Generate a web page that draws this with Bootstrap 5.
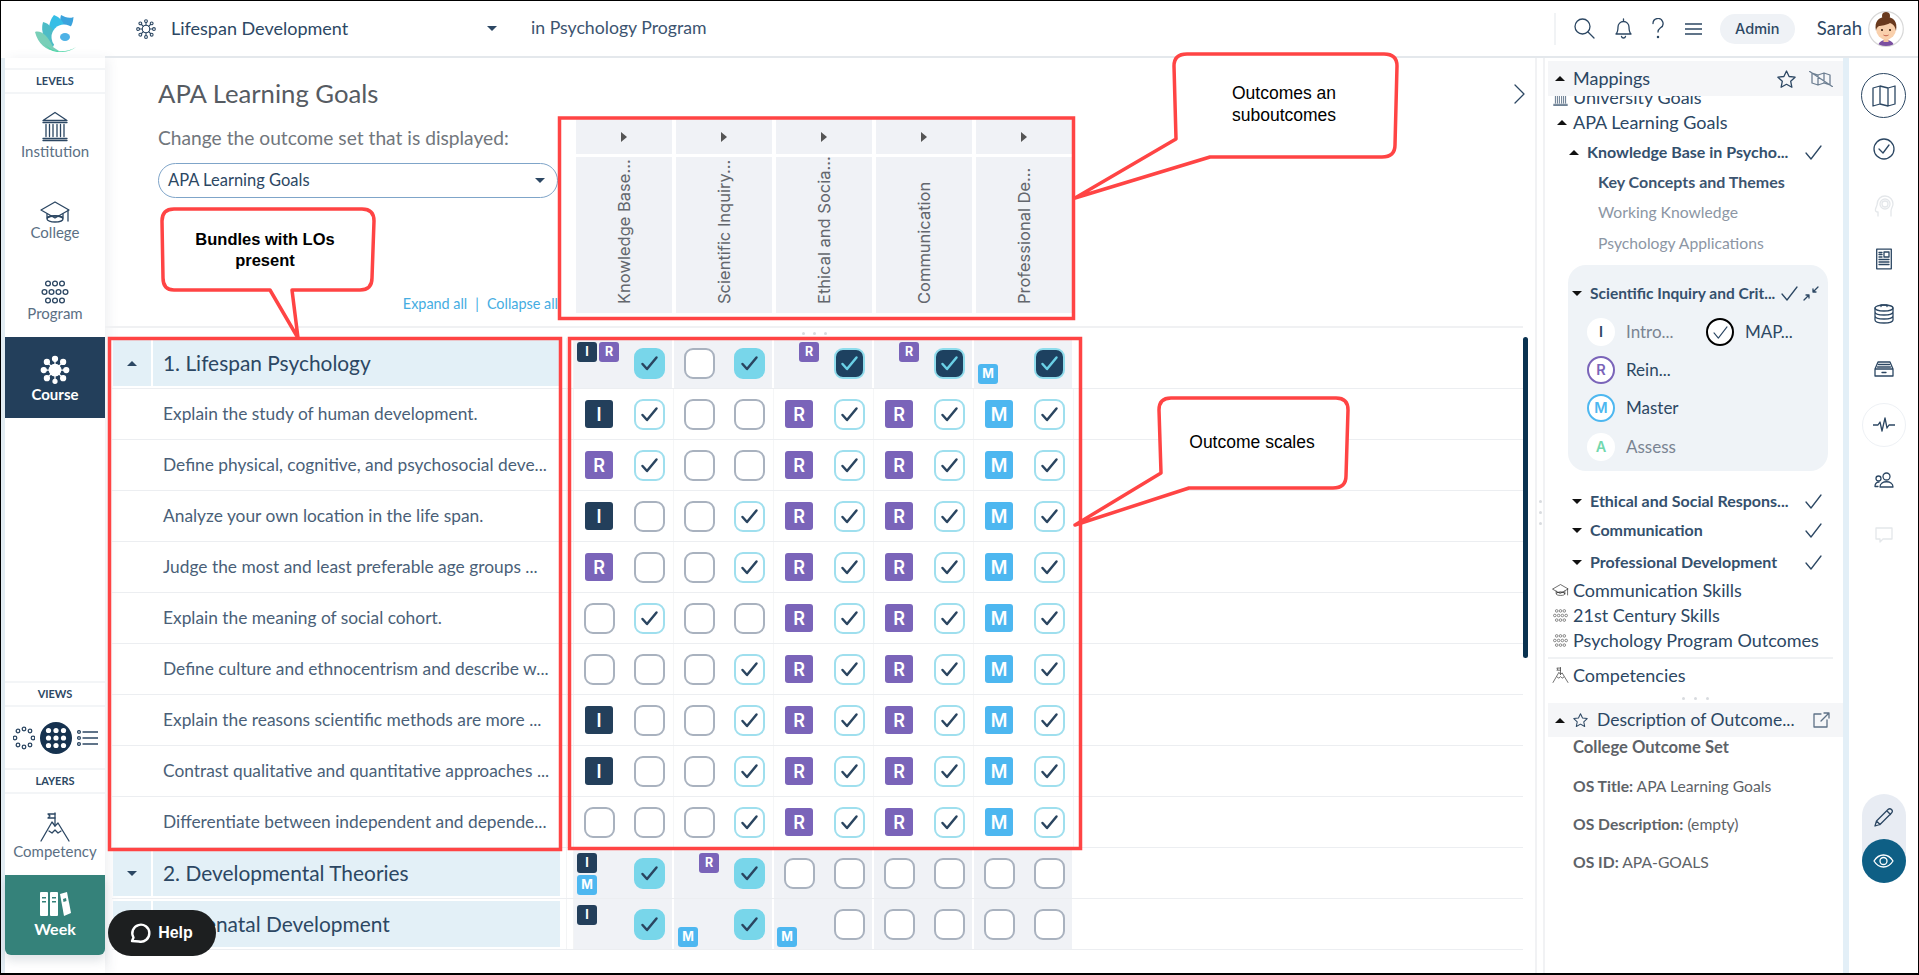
<!DOCTYPE html>
<html lang="en">
<head>
  <meta charset="UTF-8" />
  <title>APA Learning Goals</title>
  <link href="https://cdn.jsdelivr.net/npm/bootstrap@5.3.3/dist/css/bootstrap.min.css" rel="stylesheet" />
  <style>
    html, body { margin: 0; height: 975px; overflow: hidden; background: #fff; }
    body { font-family: "Lato", "Open Sans", sans-serif; color: #2c4763; }
    .frame { width: 1919px; height: 975px; border: 1px solid #000; border-bottom-width: 2px; position: relative; overflow: hidden; }
    .ico { fill: none; stroke: #2c4763; stroke-width: 1.3; stroke-linecap: round; stroke-linejoin: round; display: block; }

    /* left rail */
    .side-wrap { width: 104px; background: #e4eef4; flex: none; padding-left: 4px; }
    .side-logo { height: 57px; background: #fff; margin-left: -4px; padding-left: 34px; padding-top: 13px; width: 104px; }
    .side-in { width: 100px; height: 915px; background: #fff; box-shadow: 4px 0 10px rgba(60, 80, 100, .08); }
    .side-cap { height: 26px; border-top: 2px solid #f3f5f7; border-bottom: 2px solid #f3f5f7; font-size: 11px; font-weight: 700; line-height: 22px; text-align: center; color: #2c4763; }
    .side-item { height: 81px; padding-bottom: 15px; font-size: 15px; line-height: 17px; color: #5b6f84; }
    .side-item svg { margin-bottom: 1px; }
    .side-on { background: #233f5b; color: #fff; font-weight: 700; }
    .side-week { background: #35827a; color: #fff; font-weight: 700; height: 80px; padding-top: 3px; border-radius: 0 0 6px 6px; box-shadow: 0 6px 10px rgba(60, 80, 100, .15); }
    .view-row { height: 61px; padding: 0 7px 0 8px; }
    .view-on { width: 32px; height: 32px; border-radius: 50%; background: #16324f; }

    /* top bar */
    .top-bar { height: 57px; border-bottom: 2px solid #e4e8ec; padding-left: 31px; flex: none; }
    .top-title { font-size: 18px; width: 326px; margin-left: 15px; }
    .top-in { font-size: 17.7px; color: #3c5470; margin-left: 34px; }
    .top-sep { width: 2px; height: 32px; background: #f1f3f5; margin-right: 18px; }
    .admin-pill { width: 75px; height: 30px; background: #eff2f6; border-radius: 15px; font-size: 14.5px; font-family: "Inter", sans-serif; font-weight: 500; margin-left: 18px; }
    .user-name { font-size: 18.5px; margin-left: 22px; margin-right: 6px; }
    .avatar-box { width: 36px; height: 36px; margin-right: 14px; }

    .crt-up, .crt-dn, .crt-r { display: inline-block; width: 0; height: 0; flex: none; }
    .crt-up { border-left: 5px solid transparent; border-right: 5px solid transparent; border-bottom: 5px solid #2c4763; }
    .crt-dn { border-left: 5px solid transparent; border-right: 5px solid transparent; border-top: 5px solid #2c4763; }
    .crt-r { border-top: 5px solid transparent; border-bottom: 5px solid transparent; border-left: 6px solid #555; }
    .crt-blk { border-bottom-color: #111; border-top-color: #111; }

    /* heading area */
    .main-col { width: 1418px; flex: none; }
    .head-zone { height: 270px; border-bottom: 2px solid #f0f1f3; }
    .head-left { width: 471px; padding-left: 53px; padding-top: 20px; flex: none; }
    .page-h { font-size: 25.7px; line-height: 30px; color: #565b62; margin: 0; font-weight: 400; }
    .page-sub { font-size: 19.2px; line-height: 24px; color: #71767c; margin-top: 18px; }
    .set-select { width: 400px; height: 35px; border: 1px solid #7fa5c9; border-radius: 18px; margin-top: 13px; padding: 0 12px 0 9px; font-size: 16.5px; }
    .exp-links { margin-top: 96px; font-size: 14.4px; line-height: 20px; color: #45ade2; width: 400px; text-align: right; white-space: nowrap; }
    .exp-bar { margin: 0 8px; }
    .head-grid { padding-top: 61px; display: grid; grid-template-columns: repeat(5, 96px); grid-template-rows: 35px 156px; gap: 3px 4px; flex: none; }
    .hd-cell { background: #f0f2f6; }
    .hd-txt { writing-mode: vertical-rl; transform: rotate(180deg); font-family: "Inter", sans-serif; font-size: 16.5px; color: #63676d; padding-top: 9px; line-height: 24px; white-space: nowrap; }
    .side-arrow { margin-left: 442px; margin-top: 26px; flex: none; }

    .dots-strip { height: 10px; padding-left: 8px; }
    .dot3 { width: 3px; height: 3px; background: #d8dbdf; border-radius: 50%; }
    .tb-wrap { padding-left: 7px; width: 1418px; }
    .tb-row { height: 51px; border-bottom: 1px solid #eceef1; }
    .tb-left { width: 454px; flex: none; font-size: 17.35px; color: #4a5f78; padding-left: 51px; white-space: nowrap; }
    .tb-gut { width: 8px; flex: none; border-left: 1px solid #f3f4f5; border-right: 1px solid #f3f4f5; }
    .tb-pair { width: 100px; flex: none; border-right: 1px solid #f5f6f7; position: relative; }
    .tb-slot { width: 50px; height: 100%; flex: none; }
    .grp .tb-left { padding: 2px 6px 2px 1px; gap: 2px; font-size: 20.9px; color: #2c4763; }
    .grp-crt { width: 38px; height: 100%; background: #e3f0f7; }
    .grp-ttl { flex-grow: 1; height: 100%; background: #e3f0f7; padding-left: 10px; }
    .grp .tb-pair { background: #f0f2f6; border-right: 2px solid #fff; }
    .ck-box { width: 31px; height: 31px; border-radius: 9px; border: 2px solid #a9b2bf; background: #fff; }
    .ck-on { border-color: #9fdfee; }
    .ck-cy { background: #78d6ea; border-color: #78d6ea; }
    .ck-dk { background: #1d4160; border-color: #8fdcec; }
    .ck-box svg { fill: none; stroke: #2a4560; stroke-width: 2.5; stroke-linecap: round; stroke-linejoin: round; width: 24px; height: 24px; }
    .ck-dk svg { stroke: #6ad0e6; }
    .lvl { width: 28px; height: 28px; border-radius: 3px; color: #fff; font-family: "Inter", sans-serif; font-weight: 600; font-size: 18px; }
    .lvl-sm { width: 20px; height: 20px; font-size: 12.5px; font-weight: 700; position: absolute; }
    .lv-I { background: #233f5b; }
    .lv-R { background: #7a64b9; }
    .lv-M { background: #4db7f0; }

    .scroll-nav { width: 5px; height: 321px; background: #0a3250; border-radius: 3px; position: absolute; left: 1522px; top: 336px; }
    .gutter-main { width: 10px; flex: none; border-left: 2px solid #f1f2f4; border-right: 2px solid #f1f2f4; margin-left: 12px; padding-top: 442px; }

    /* right panel */
    .pn { width: 298px; flex: none; padding: 3px 0 0 3px; }
    .pn-strip { width: 6px; flex: none; background: #e3eff7; }
    .pn-hd { height: 35px; background: #f5f6f8; padding-left: 7px; position: relative; z-index: 1; font-size: 18px; }
    .pn-hd-d { height: 34px; font-size: 17.5px; }
    .pn-it { height: 24px; line-height: 24px; white-space: nowrap; }
    .pn-l1 { font-size: 18px; padding-left: 4px; }
    .pn-l2 { font-size: 16px; font-weight: 700; padding-left: 37px; width: 274px; color: #34506d; }
    .pn-l3 { font-size: 15.7px; padding-left: 50px; color: #8c96a4; }
    .pn-strong { font-size: 16px; font-weight: 700; color: #3c5470; }
    .pn-box { margin: 10px 0 0 20px; width: 260px; height: 206px; background: #eff3f7; border-radius: 18px; padding-top: 16px; }
    .pn-box .pn-l2 { padding-left: 14px; width: 256px; font-size: 15.5px; }
    .pn-sub { padding-left: 34px; }
    .pn-scale { padding-left: 19px; font-size: 17px; height: 28px; }
    .sc-dot { width: 28px; height: 28px; border-radius: 50%; background: #fff; font-family: "Inter", sans-serif; font-weight: 600; font-size: 14.5px; flex: none; margin-right: 11px; }
    .sc-txt { width: 80px; }
    .sc-dim { color: #7a8492; }
    .pn-ic { width: 17px; margin-right: 4px; flex: none; }
    .pn-cap { padding-left: 25px; color: #5e6368; font-size: 15.7px; }
    .pn-cap-lg { font-size: 16.6px; }
    .pn-cap b { font-weight: 700; }
    .pn-div { border-top: 2px solid #f0f2f4; width: 285px; }
    .sep-bar { height: 10px; gap: 9px; }
    .mt-n11 { margin-top: -11px; } .mt-n2 { margin-top: -2px; } .mt1px { margin-top: 1px; }
    .mt4 { margin-top: 4px; } .mt5 { margin-top: 5px; } .mt6 { margin-top: 6px; } .mt7 { margin-top: 7px; } .mt8 { margin-top: 8px; }
    .mt10 { margin-top: 10px; } .mt11 { margin-top: 11px; } .mt13 { margin-top: 13px; } .mt14 { margin-top: 14px; }
    .mt15 { margin-top: 15px; } .mt18 { margin-top: 18px; }

    /* right rail */
    .rl { width: 69px; flex: none; padding-bottom: 90px; }
    .rl-ring { width: 45px; height: 45px; border-radius: 50%; border: 1.5px solid #2c4763; margin-top: 15px; flex: none; }
    .rl-ic { margin-top: 33px; height: 22px; flex: none; }
    .rl-pulse { width: 44px; height: 44px; border-radius: 50%; border: 1.5px solid #eef1f5; margin-top: 22px; flex: none; }
    .rl-pill { width: 44px; height: 89px; background: #e8ecf3; border-radius: 22px; margin-top: auto; flex: none; }
    .rl-eye { width: 44px; height: 44px; background: #0e5f85; border-radius: 50%; }

    /* floating */
    .help-btn { position: absolute; left: 107px; top: 909px; width: 108px; height: 46px; background: #1d1f20; color: #fff; border-radius: 23px; font-family: "Liberation Sans", sans-serif; font-weight: 700; font-size: 16px; z-index: 5; gap: 7px; padding-right: 4px; }
    .note-layer { position: absolute; left: -1px; top: -1px; z-index: 4; pointer-events: none; }
    .note-layer text { font-family: "Liberation Sans", sans-serif; fill: #000; text-anchor: middle; }
    .note-b { font-size: 16.5px; font-weight: 700; }
    .note-r { font-size: 17.5px; }
  </style>
</head>
<body>
<svg width="0" height="0" class="position-absolute">
  <symbol id="tick" viewBox="0 0 24 24"><path d="M5.5 13l4.5 5L19.5 6.5"/></symbol>
  <symbol id="flower" viewBox="0 0 24 24"><circle cx="12" cy="12" r="4.5"/><path d="M12 7.5V4M12 16.5V20M7.5 12H4M16.5 12H20M8.800 8.800L6.300 6.300M15.200 15.200l2.500 2.500M15.200 8.800l2.500-2.500M8.800 15.200l-2.500 2.500"/><circle cx="12" cy="2.500" r="1.700"/><circle cx="12" cy="21.500" r="1.700"/><circle cx="2.500" cy="12" r="1.700"/><circle cx="21.500" cy="12" r="1.700"/><circle cx="5.200" cy="5.200" r="1.700"/><circle cx="18.800" cy="18.800" r="1.700"/><circle cx="18.800" cy="5.200" r="1.700"/><circle cx="5.200" cy="18.800" r="1.700"/></symbol>
  <symbol id="dots" viewBox="0 0 30 24"><circle cx="8" cy="3.500" r="2.400"/><circle cx="15" cy="3.500" r="2.400"/><circle cx="22" cy="3.500" r="2.400"/><circle cx="4.500" cy="12" r="2.400"/><circle cx="11.500" cy="12" r="2.400"/><circle cx="18.500" cy="12" r="2.400"/><circle cx="25.500" cy="12" r="2.400"/><circle cx="8" cy="20.500" r="2.400"/><circle cx="15" cy="20.500" r="2.400"/><circle cx="22" cy="20.500" r="2.400"/></symbol>
  <symbol id="bank" viewBox="0 0 26 30"><path d="M1 9L13 1l12 8z"/><path d="M1 11h24M4 13v12M7.500 13v12M11 13v12M15 13v12M18.500 13v12M22 13v12M1 27h24M1 29h24"/></symbol>
  <symbol id="cap" viewBox="0 0 30 22"><path d="M1 9L15 1l14 8-14 8z"/><path d="M7 13v4c3-3 13-3 16 0v-4"/><ellipse cx="15" cy="18" rx="8" ry="3"/><path d="M28 9v11"/></symbol>
  <symbol id="peak" viewBox="0 0 30 30"><path d="M1 29L12 10l3 4 3-3 11 18"/><path d="M9 19l3 2 3-3 3 3 3-2"/><path d="M15 14V1"/><path d="M15 2H8l2 2-2 2h7"/></symbol>
</svg>

<div class="frame d-flex">
  <!-- left rail -->
  <div class="side-wrap">
    <div class="side-logo">
      <svg width="41" height="38" viewBox="0 0 41 38" class="d-block">
        <path d="M38.500 3C38 10 36 15 30 15 26 12 24 8 26 1c4 2 8 4 12.500 2z" fill="#3ba3dd"/>
        <path d="M19 1c7 3 11 8 10 14L18 28C12 20 13 8 19 1z" fill="#35bee6"/>
        <path d="M8 8c6 1 12 8 13 18l-3 7C10 28 5 18 8 8z" fill="#4dbcc6"/>
        <path d="M0 18c6-2 13 4 18 15l6 4C12 38 3 30 0 18z" fill="#79cfb8"/>
        <path d="M10 30c6 8 20 10 31 3-5 4.500-13 5.500-19 5-6-1-10-4-12-8z" fill="#4fd6a8"/>
        <circle cx="29" cy="23" r="12.500" fill="#fff"/>
        <ellipse cx="30" cy="23" rx="5" ry="4" fill="#4db2e6"/>
      </svg>
    </div>
    <div class="side-in d-flex flex-column">
      <div class="side-cap mt10">LEVELS</div>
      <div class="side-item d-flex flex-column align-items-center justify-content-end">
        <svg class="ico" width="26" height="31"><use href="#bank"/></svg>Institution
      </div>
      <div class="side-item d-flex flex-column align-items-center justify-content-end">
        <svg class="ico" width="30" height="22"><use href="#cap"/></svg>College
      </div>
      <div class="side-item d-flex flex-column align-items-center justify-content-end">
        <svg class="ico" width="30" height="24"><use href="#dots"/></svg>Program
      </div>
      <div class="side-item side-on d-flex flex-column align-items-center justify-content-end">
        <svg width="30" height="30" viewBox="0 0 24 24" fill="#fff" stroke="#fff"><circle cx="12" cy="12" r="4.600"/><path d="M12 3v18M3 12h18M5.500 5.500l13 13M18.500 5.500l-13 13" stroke-width="1"/><circle cx="12" cy="3" r="2"/><circle cx="12" cy="21" r="1.600"/><circle cx="3" cy="12" r="2"/><circle cx="21" cy="12" r="2"/><circle cx="5.500" cy="5.500" r="2"/><circle cx="18.500" cy="18.500" r="2"/><circle cx="18.500" cy="5.500" r="2"/><circle cx="5.500" cy="18.500" r="2"/></svg>
        Course
      </div>
      <div class="flex-grow-1"></div>
      <div class="side-cap">VIEWS</div>
      <div class="view-row d-flex align-items-center justify-content-between">
        <svg class="ico" width="22" height="24" viewBox="0 0 22 24"><circle cx="11" cy="3" r="1.800"/><circle cx="17" cy="5" r="1.800"/><circle cx="20" cy="12" r="1.800"/><circle cx="17" cy="19" r="1.800"/><circle cx="11" cy="21" r="1.800"/><circle cx="5" cy="19" r="1.800"/><circle cx="2" cy="12" r="1.800"/><circle cx="5" cy="5" r="1.800"/></svg>
        <div class="view-on d-flex align-items-center justify-content-center">
          <svg width="24" height="24" viewBox="0 0 24 24" fill="#fff"><circle cx="4.500" cy="4.500" r="2.600"/><circle cx="12" cy="4.500" r="2.600"/><circle cx="19.500" cy="4.500" r="2.600"/><circle cx="4.500" cy="12" r="2.600"/><circle cx="12" cy="12" r="2.600"/><circle cx="19.500" cy="12" r="2.600"/><circle cx="4.500" cy="19.500" r="2.600"/><circle cx="12" cy="19.500" r="2.600"/><circle cx="19.500" cy="19.500" r="2.600"/></svg>
        </div>
        <svg class="ico" width="21" height="16" viewBox="0 0 21 16"><circle cx="2" cy="2" r="1.400"/><circle cx="2" cy="8" r="1.400"/><circle cx="2" cy="14" r="1.400"/><path d="M6 2h15M6 8h15M6 14h15"/></svg>
      </div>
      <div class="side-cap">LAYERS</div>
      <div class="side-item d-flex flex-column align-items-center justify-content-end">
        <svg class="ico" width="30" height="30"><use href="#peak"/></svg>Competency
      </div>
      <div class="side-week d-flex flex-column align-items-center justify-content-center">
        <svg width="31" height="25" viewBox="0 0 31 25" fill="#fff"><rect x="0" y="0" width="8" height="24" rx="1"/><rect x="10" y="0" width="8" height="24" rx="1"/><path d="M20 2l7-2 4 21-7 3z"/><g fill="#35827a"><rect x="2" y="5" width="4" height="1.500"/><rect x="2" y="9" width="4" height="1.500"/><rect x="12" y="5" width="4" height="1.500"/><rect x="12" y="9" width="4" height="1.500"/><path d="M23 7l3-1 .5 3-3 1z"/></g></svg>
        Week
      </div>
      <div style="height:18px"></div>
    </div>
  </div>

  <!-- centre column -->
  <div class="flex-grow-1 d-flex flex-column" style="min-width:0">
    <div class="top-bar d-flex align-items-center">
      <svg class="ico" width="20" height="20"><use href="#flower"/></svg>
      <div class="top-title d-flex align-items-center justify-content-between"><span>Lifespan Development</span><i class="crt-dn"></i></div>
      <div class="top-in">in Psychology Program</div>
      <div class="d-flex align-items-center ms-auto">
        <div class="top-sep"></div>
        <svg class="ico" width="21" height="21" viewBox="0 0 21 21"><circle cx="8.500" cy="8.500" r="7.500"/><path d="M14 14l6 6"/></svg>
        <svg class="ico" width="17" height="21" viewBox="0 0 17 21" style="margin-left:20px"><path d="M8.500 1v2M1 16c2-2 2-4 2-7a5.500 5.500 0 0 1 11 0c0 3 0 5 2 7z"/><path d="M6.500 18.500c.5 2 3.500 2 4 0"/></svg>
        <svg class="ico" width="12" height="21" viewBox="0 0 12 21" style="margin-left:20px"><path d="M1 5.500a5 5 0 1 1 7.500 4.300C7 11 6 12 6 14"/><circle cx="6" cy="19" r=".6"/></svg>
        <svg class="ico" width="17" height="12" viewBox="0 0 17 12" style="margin-left:21px"><path d="M0 1h17M0 6h17M0 11h17"/></svg>
        <div class="admin-pill d-flex align-items-center justify-content-center">Admin</div>
        <div class="user-name">Sarah</div>
        <div class="avatar-box">
          <svg width="36" height="36" viewBox="0 0 36 36">
            <defs><clipPath id="avc"><circle cx="18" cy="18" r="17"/></clipPath></defs>
            <circle cx="18" cy="18" r="17.300" fill="#fff" stroke="#d8d8d8" stroke-width="1.200"/>
            <g clip-path="url(#avc)">
              <path d="M10 36c0-5 4-7 8-7s8 2 8 7z" fill="#7a4fa0"/>
              <rect x="15.500" y="24" width="5" height="7" fill="#f3c39d"/>
              <ellipse cx="18" cy="18" rx="10" ry="10.500" fill="#f9d0ac"/>
              <path d="M8 20C6 10 11 6 18 6s12 4 10 14c-1-5-3-7-6-8-3 2-9 3-11 3-2 1-3 3-3 5z" fill="#6a3a1e"/>
              <circle cx="18" cy="5" r="4" fill="#6a3a1e"/>
              <circle cx="14" cy="19" r="1.100" fill="#3a2010"/><circle cx="22" cy="19" r="1.100" fill="#3a2010"/>
              <path d="M15.500 24c1.500 1 3.500 1 5 0" fill="none" stroke="#c0553f" stroke-width=".9"/>
            </g>
          </svg>
        </div>
      </div>
    </div>

    <div class="d-flex flex-grow-1" style="min-height:0">
      <div class="main-col d-flex flex-column">
        <div class="head-zone d-flex">
          <div class="head-left">
            <h1 class="page-h">APA Learning Goals</h1>
            <div class="page-sub">Change the outcome set that is displayed:</div>
            <div class="set-select d-flex align-items-center justify-content-between"><span>APA Learning Goals</span><i class="crt-dn"></i></div>
            <div class="exp-links">Expand all<span class="exp-bar">|</span>Collapse all</div>
          </div>
          <div class="head-grid" id="headGrid"></div>
          <svg class="ico side-arrow" width="11" height="20" viewBox="0 0 11 20"><path d="M1 1l9 9-9 9"/></svg>
        </div>
        <div class="dots-strip d-flex align-items-center justify-content-center gap-2" style="margin-right:0"><i class="dot3" style="margin-left:-8px"></i><i class="dot3"></i><i class="dot3"></i></div>
        <div class="tb-wrap" id="rows"></div>
      </div>
      <div class="gutter-main d-flex flex-column align-items-center gap-2"><i class="dot3"></i><i class="dot3"></i><i class="dot3"></i></div>
      <div class="scroll-nav"></div>

      <!-- right panel -->
      <div class="pn d-flex flex-column">
        <div class="pn-hd d-flex align-items-center">
          <i class="crt-up crt-blk me-2"></i><span>Mappings</span>
          <svg class="ico ms-auto" width="19" height="18" viewBox="0 0 19 18"><path d="M9.500 1l2.600 5.500 6 .7-4.400 4.100 1.200 6-5.400-3-5.400 3 1.200-6L.9 7.200l6-.7z"/></svg>
          <svg class="ico" width="24" height="16" viewBox="0 0 24 16" style="margin:0 10px 0 13px;stroke:#6d7f92"><path d="M3 2l6 2 6-2 6 2v10l-6-2-6 2-6-2zM9 4v10M15 2v10M0 0l24 16"/></svg>
        </div>
        <div class="pn-it pn-l1 d-flex align-items-center mt-n11"><svg class="ico pn-ic" width="15" height="17"><use href="#bank"/></svg>University Goals</div>
        <div class="pn-it pn-l1 d-flex align-items-center mt1px"><span class="pn-ic" style="padding-left:5px"><i class="crt-up crt-blk d-block"></i></span>APA Learning Goals</div>
        <div class="pn-it pn-l2 d-flex align-items-center mt6"><i class="crt-up crt-blk me-2" style="margin-left:-16px"></i><span>Knowledge Base in Psycho...</span>
          <svg class="ico ms-auto" width="17" height="15" viewBox="0 0 17 15"><path d="M1 8l5 6L16 1"/></svg></div>
        <div class="pn-it pn-l3 pn-strong mt6">Key Concepts and Themes</div>
        <div class="pn-it pn-l3 mt6">Working Knowledge</div>
        <div class="pn-it pn-l3 mt7">Psychology Applications</div>
        <div class="pn-box">
          <div class="pn-it pn-l2 d-flex align-items-center"><i class="crt-dn crt-blk me-2" style="margin-left:-10px"></i><span>Scientific Inquiry and Crit...</span>
            <svg class="ico ms-auto" width="17" height="15" viewBox="0 0 17 15"><path d="M1 8l5 6L16 1"/></svg>
            <svg class="ico" width="16" height="15" viewBox="0 0 16 15" style="margin:0 5px"><path d="M1 14l5-5M3 9h3v3M15 1l-5 5M13 6h-3V3"/></svg></div>
          <div class="pn-scale d-flex align-items-center mt13"><div class="sc-dot d-flex align-items-center justify-content-center">I</div><div class="sc-txt sc-dim">Intro...</div>
            <div class="sc-dot d-flex align-items-center justify-content-center" style="border:2px solid #000"><svg class="ico" width="15" height="13" viewBox="0 0 17 15"><path d="M1 8l5 6L16 1"/></svg></div><div>MAP...</div></div>
          <div class="pn-scale d-flex align-items-center mt10"><div class="sc-dot d-flex align-items-center justify-content-center" style="border:2px solid #7a64b9;color:#7a64b9">R</div><div>Rein...</div></div>
          <div class="pn-scale d-flex align-items-center mt10"><div class="sc-dot d-flex align-items-center justify-content-center" style="border:2px solid #4db7f0;color:#4db7f0">M</div><div>Master</div></div>
          <div class="pn-scale d-flex align-items-center mt11"><div class="sc-dot d-flex align-items-center justify-content-center" style="color:#72d8ae">A</div><div class="sc-dim">Assess</div></div>
        </div>
        <div class="pn-it pn-l2 pn-sub d-flex align-items-center mt18"><i class="crt-dn crt-blk me-2" style="margin-left:-10px"></i><span>Ethical and Social Respons...</span>
          <svg class="ico ms-auto" width="17" height="15" viewBox="0 0 17 15"><path d="M1 8l5 6L16 1"/></svg></div>
        <div class="pn-it pn-l2 pn-sub d-flex align-items-center mt5"><i class="crt-dn crt-blk me-2" style="margin-left:-10px"></i><span>Communication</span>
          <svg class="ico ms-auto" width="17" height="15" viewBox="0 0 17 15"><path d="M1 8l5 6L16 1"/></svg></div>
        <div class="pn-it pn-l2 pn-sub d-flex align-items-center mt8"><i class="crt-dn crt-blk me-2" style="margin-left:-10px"></i><span>Professional Development</span>
          <svg class="ico ms-auto" width="17" height="15" viewBox="0 0 17 15"><path d="M1 8l5 6L16 1"/></svg></div>
        <div class="pn-it pn-l1 d-flex align-items-center mt4"><svg class="ico pn-ic" width="16" height="12" style="stroke:#333"><use href="#cap"/></svg>Communication Skills</div>
        <div class="pn-it pn-l1 d-flex align-items-center mt1px"><svg class="pn-ic" width="16" height="13" fill="none" stroke="#333"><use href="#dots"/></svg>21st Century Skills</div>
        <div class="pn-it pn-l1 d-flex align-items-center mt1px"><svg class="pn-ic" width="16" height="13" fill="none" stroke="#333"><use href="#dots"/></svg>Psychology Program Outcomes</div>
        <div class="pn-div mt5"></div>
        <div class="pn-it pn-l1 d-flex align-items-center mt4"><svg class="ico pn-ic" width="16" height="16" style="stroke:#333"><use href="#peak"/></svg>Competencies</div>
        <div class="sep-bar d-flex align-items-center justify-content-center mt6"><i class="dot3"></i><i class="dot3"></i><i class="dot3"></i></div>
        <div class="pn-hd pn-hd-d d-flex align-items-center">
          <i class="crt-up crt-blk me-2"></i>
          <svg class="ico" width="15" height="14" viewBox="0 0 19 18"><path d="M9.500 1l2.600 5.500 6 .7-4.400 4.100 1.200 6-5.400-3-5.400 3 1.200-6L.9 7.200l6-.7z"/></svg>
          <span style="margin-left:9px">Description of Outcome...</span>
          <svg class="ico ms-auto" width="17" height="16" viewBox="0 0 17 16" style="margin-right:13px;stroke:#5e7186"><path d="M8 2H1v13h13V8M8 9l8-8M11 1h5v5"/></svg>
        </div>
        <div class="pn-it pn-cap pn-cap-lg mt-n2"><b>College Outcome Set</b></div>
        <div class="pn-it pn-cap mt15"><b>OS Title:</b> APA Learning Goals</div>
        <div class="pn-it pn-cap mt14"><b>OS Description:</b> (empty)</div>
        <div class="pn-it pn-cap mt14"><b>OS ID:</b> APA-GOALS</div>
      </div>
      <div class="pn-strip"></div>

      <!-- right rail -->
      <div class="rl d-flex flex-column align-items-center">
        <div class="rl-ring d-flex align-items-center justify-content-center"><svg class="ico" width="24" height="22" viewBox="0 0 24 22"><path d="M1 3l7-2 8 2 7-2v18l-7 2-8-2-7 2zM8 1v18M16 3v18"/></svg></div>
        <svg class="ico rl-ic" width="22" height="22" viewBox="0 0 22 22" style="margin-top:20px"><circle cx="11" cy="11" r="10"/><path d="M6 11l4 4 6-8"/></svg>
        <svg class="ico rl-ic" width="20" height="22" viewBox="0 0 20 22" style="stroke:#e4e7ea;margin-top:35px"><path d="M4 21v-4c-2 0-3-1-2.500-3L3 10C3 4 7 1 11 1c5 0 8 4 8 8 0 3-2 4-2 7v5"/><circle cx="11" cy="9" r="3"/><circle cx="11" cy="9" r="5"/></svg>
        <svg class="ico rl-ic" width="16" height="21" viewBox="0 0 16 21" style="margin-top:31px"><rect x=".7" y=".7" width="14.600" height="19.600"/><rect x="8" y="3.500" width="5" height="5"/><path d="M3 4h3M3 6h3M3 8.500h3M3 11h10M3 13.500h10M3 16h10"/></svg>
        <svg class="ico rl-ic" width="20" height="21" viewBox="0 0 20 21"><ellipse cx="10" cy="4.500" rx="9" ry="3"/><path d="M7 3V1.500h6V3M1 4.500v4c0 4 18 4 18 0v-4M1 8.500v4c0 4 18 4 18 0v-4M1 12.500v4c0 4 18 4 18 0v-4"/></svg>
        <svg class="ico rl-ic" width="20" height="16" viewBox="0 0 20 16" style="margin-bottom:1px"><path d="M4 1h12l3 7v7H1V8zM1 8h18M4.500 3.500h11M3.500 6h13M8 11.500h4"/></svg>
        <div class="rl-pulse d-flex align-items-center justify-content-center"><svg class="ico" width="22" height="16" viewBox="0 0 22 16"><path d="M0 8h5l2-3 2 9 3-13 2 10 2-3h6"/></svg></div>
        <svg class="ico rl-ic" width="20" height="16" viewBox="0 0 20 16" style="margin-top:22px;margin-bottom:6px"><circle cx="12.500" cy="4.500" r="3.500"/><circle cx="4.500" cy="6.500" r="2.500"/><path d="M6 15c0-7 13-7 13 0zM5 10c-3 0-4 2-4 4.500h3"/></svg>
        <svg class="ico rl-ic" width="18" height="16" viewBox="0 0 18 16" style="stroke:#e4e7ea;margin-top:27px"><path d="M1 1h16v11H8l-3 3v-3H1z"/></svg>
        <div class="rl-pill d-flex flex-column align-items-center">
          <div class="flex-grow-1 d-flex align-items-center"><svg class="ico" width="20" height="20" viewBox="0 0 20 20"><path d="M1 19l1.500-5L14 2.500c1-1 2.500-1 3.500 0s1 2.500 0 3.500L6 17.500zM2.500 14L6 17.500M13 4l3.500 3.500"/></svg></div>
          <div class="rl-eye d-flex align-items-center justify-content-center"><svg class="ico" width="21" height="14" viewBox="0 0 21 14" style="stroke:#fff"><path d="M1 7c5-8 14-8 19 0-5 8-14 8-19 0z"/><circle cx="10.500" cy="7" r="3.500"/></svg></div>
        </div>
      </div>
    </div>
  </div>

  <div class="help-btn d-flex align-items-center justify-content-center">
    <svg width="24" height="24" viewBox="0 0 24 24" fill="none" stroke="#fff" stroke-width="2.400"><path d="M5 20l1.500-3.500A8.500 8.500 0 1 1 12 20.500z" stroke-linejoin="round"/></svg>
    <span>Help</span>
  </div>

  <!-- annotations drawn on top of the app -->
  <svg class="note-layer" width="1919" height="975" viewBox="0 0 1919 975">
    <g fill="none" stroke="#ff4444" stroke-width="3.500">
      <rect x="109.500" y="338.500" width="451" height="511"/>
      <rect x="569.500" y="338.500" width="511" height="510"/>
      <rect x="559.500" y="118" width="514" height="200.500"/>
    </g>
    <g fill="#fff" stroke="#ff4444" stroke-width="3.500" stroke-linejoin="round">
      <path d="M174 209H362Q374 209 374 221L372 278Q372 290 360 290H292L298 338L270 290H174Q163 290 163 278L162 221Q162 209 174 209Z"/>
      <path d="M1187 54H1384Q1397 54 1397 66L1395 145Q1395 157 1382 157H1210L1075 198L1176 139L1174 66Q1174 54 1187 54Z"/>
      <path d="M1171 398H1336Q1348 398 1348 410L1346 476Q1346 488 1333 488H1189L1075 525L1161 473L1159 410Q1159 398 1171 398Z"/>
    </g>
    <text class="note-b" x="265" y="245">Bundles with LOs</text>
    <text class="note-b" x="265" y="266">present</text>
    <text class="note-r" x="1284" y="99">Outcomes an</text>
    <text class="note-r" x="1284" y="121">suboutcomes</text>
    <text class="note-r" x="1252" y="448">Outcome scales</text>
  </svg>
</div>

<script src="https://cdn.jsdelivr.net/npm/bootstrap@5.3.3/dist/js/bootstrap.bundle.min.js"></script>
<script>
  const headers = ["Knowledge Base...", "Scientific Inquiry...", "Ethical and Socia...", "Communication", "Professional De..."];
  const cc = "d-flex align-items-center justify-content-center";

  document.getElementById("headGrid").innerHTML =
    headers.map(() => `<div class="hd-cell ${cc}"><i class="crt-r"></i></div>`).join("") +
    headers.map(h => `<div class="hd-cell d-flex justify-content-center"><div class="hd-txt">${h}</div></div>`).join("");

  const tick = '<svg><use href="#tick"/></svg>';
  function box(kind) {
    if (kind === "on") return `<div class="ck-box ck-on ${cc}">${tick}</div>`;
    if (kind === "cy") return `<div class="ck-box ck-cy ${cc}">${tick}</div>`;
    if (kind === "dk") return `<div class="ck-box ck-dk ${cc}">${tick}</div>`;
    return '<div class="ck-box"></div>';
  }
  function lvl(l) { return `<div class="lvl lv-${l} ${cc}">${l}</div>`; }
  // small scale tag in a bundle row: [letter, left, top]
  function tag(t) { return `<div class="lvl lvl-sm lv-${t[0]} ${cc}" style="left:${t[1]}px;top:${t[2]}px">${t[0]}</div>`; }
  function slot(html) { return `<div class="tb-slot ${cc}">${html}</div>`; }

  function rowOf(left, pairs, cls) {
    return `<div class="tb-row d-flex ${cls}">${left}<div class="tb-gut"></div>` +
      pairs.map(p => `<div class="tb-pair d-flex">${(p.tags || []).map(tag).join("")}${slot(p.a)}${slot(p.b)}</div>`).join("") +
      "</div>";
  }
  function group(title, open, pairs) {
    const left = `<div class="tb-left d-flex"><div class="grp-crt ${cc}"><i class="${open ? "crt-up" : "crt-dn"}"></i></div>` +
      `<div class="grp-ttl d-flex align-items-center">${title}</div></div>`;
    return rowOf(left, pairs, "grp");
  }
  function lo(text, first, b, c, d) {
    const left = `<div class="tb-left d-flex align-items-center">${text}</div>`;
    const on = v => box(v ? "on" : "");
    return rowOf(left, [
      { a: first ? lvl(first) : box(""), b: on(b) },
      { a: on(c), b: on(d) },
      { a: lvl("R"), b: box("on") },
      { a: lvl("R"), b: box("on") },
      { a: lvl("M"), b: box("on") }
    ], "");
  }

  const e = "";
  document.getElementById("rows").innerHTML = [
    group("1. Lifespan Psychology", true, [
      { tags: [["I", 3, 4], ["R", 25, 4]], a: e, b: box("cy") },
      { a: box(""), b: box("cy") },
      { tags: [["R", 25, 4]], a: e, b: box("dk") },
      { tags: [["R", 25, 4]], a: e, b: box("dk") },
      { tags: [["M", 4, 26]], a: e, b: box("dk") }
    ]),
    lo("Explain the study of human development.", "I", 1, 0, 0),
    lo("Define physical, cognitive, and psychosocial deve...", "R", 1, 0, 0),
    lo("Analyze your own location in the life span.", "I", 0, 0, 1),
    lo("Judge the most and least preferable age groups ...", "R", 0, 0, 1),
    lo("Explain the meaning of social cohort.", "", 1, 0, 0),
    lo("Define culture and ethnocentrism and describe w...", "", 0, 0, 1),
    lo("Explain the reasons scientific methods are more ...", "I", 0, 0, 1),
    lo("Contrast qualitative and quantitative approaches ...", "I", 0, 0, 1),
    lo("Differentiate between independent and depende...", "", 0, 0, 1),
    group("2. Developmental Theories", false, [
      { tags: [["I", 3, 5], ["M", 3, 27]], a: e, b: box("cy") },
      { tags: [["R", 25, 5]], a: e, b: box("cy") },
      { a: box(""), b: box("") },
      { a: box(""), b: box("") },
      { a: box(""), b: box("") }
    ]),
    group("3. Prenatal Development", false, [
      { tags: [["I", 3, 6]], a: e, b: box("cy") },
      { tags: [["M", 4, 28]], a: e, b: box("cy") },
      { tags: [["M", 3, 28]], a: e, b: box("") },
      { a: box(""), b: box("") },
      { a: box(""), b: box("") }
    ])
  ].join("");
</script>
</body>
</html>
